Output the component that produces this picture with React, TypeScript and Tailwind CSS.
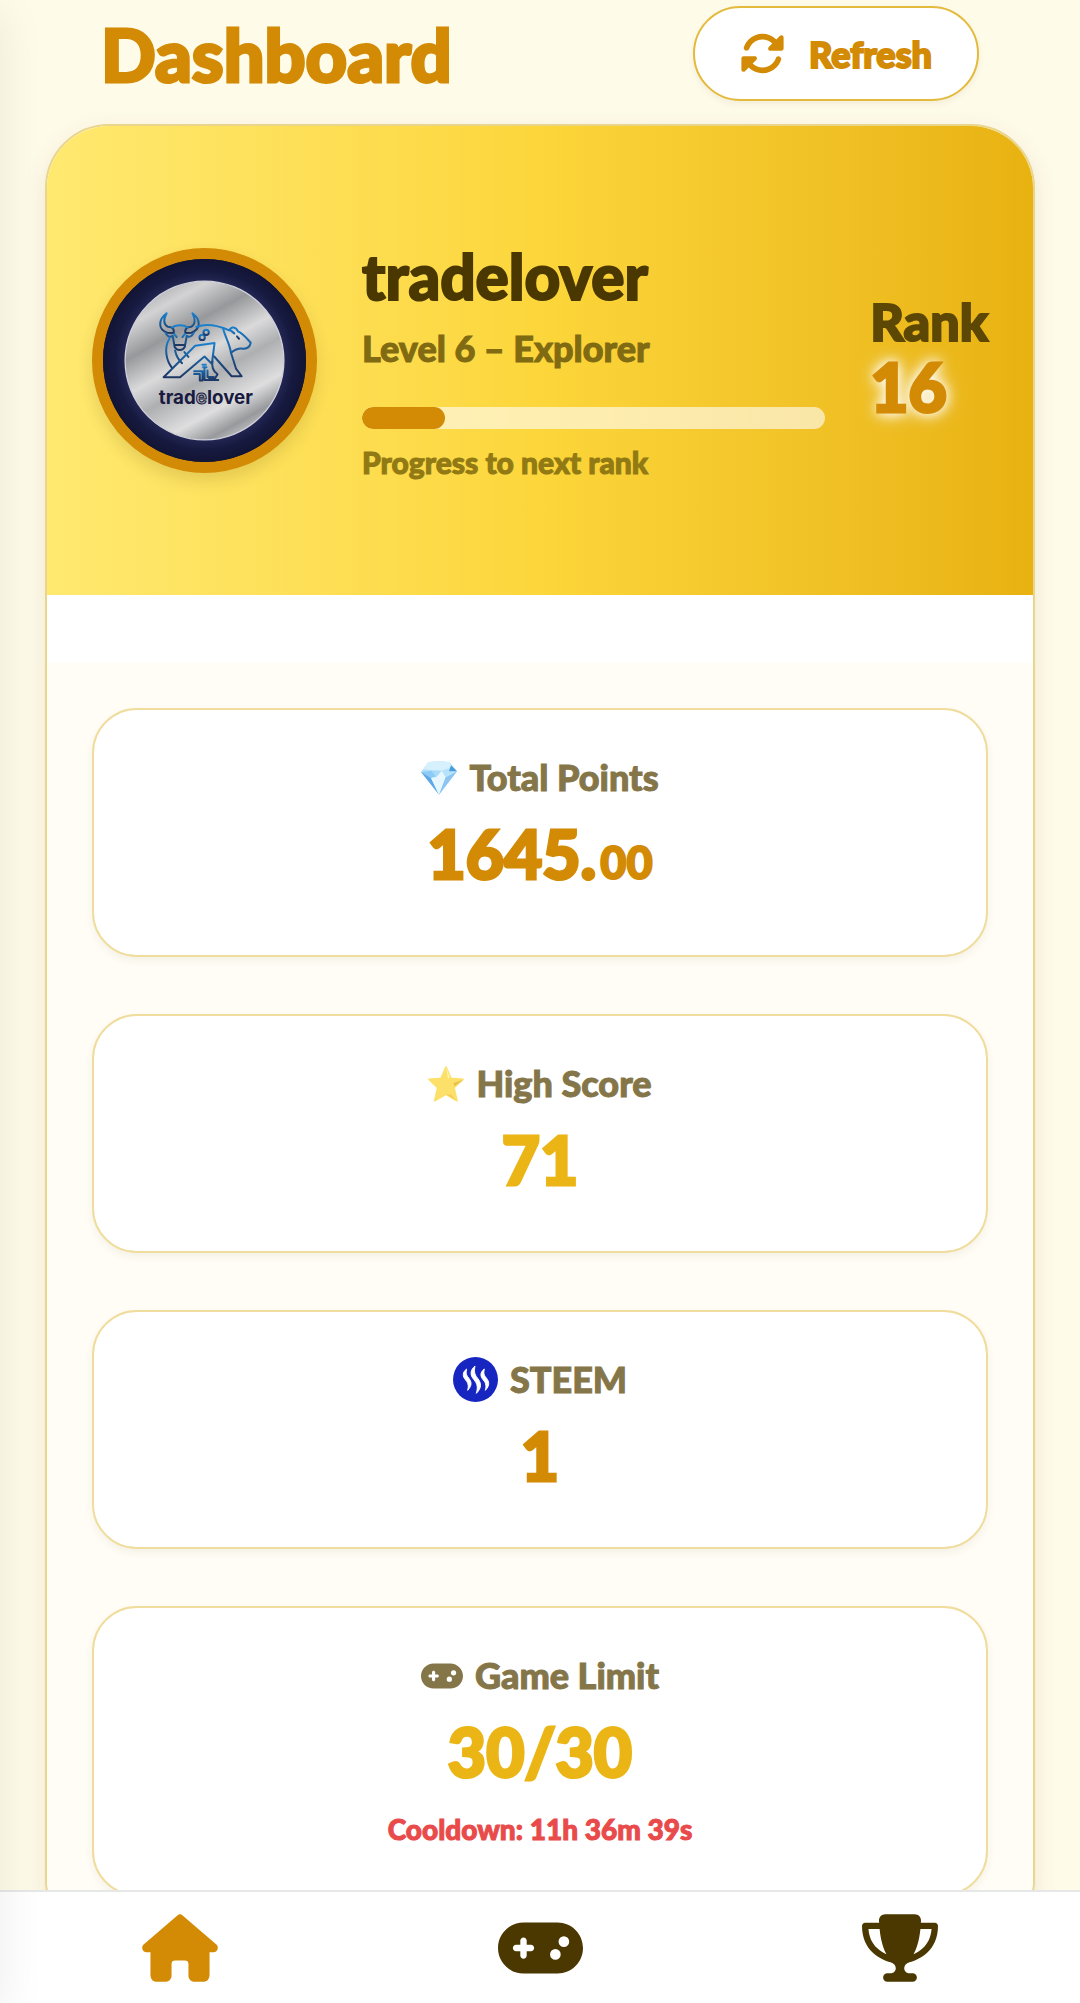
import type { ReactNode } from 'react';
import { FaGamepad, FaRotate, FaTrophy } from 'react-icons/fa6';

type StatTone = 'amber' | 'gold';

interface StatCardProps {
  icon: ReactNode;
  label: string;
  value: string;
  decimals?: string;
  tone?: StatTone;
  note?: string;
}

const TONE_MAP: Record<StatTone, string> = {
  amber: 'text-[#d38a04]',
  gold: 'text-[#eab515]',
};

function HomeIcon({ className }: { className?: string }) {
  return (
    <svg viewBox="0 0 576 512" fill="currentColor" className={className} aria-hidden="true">
      <path d="M268 9C280-3 296-3 308 9L566 232C582 248 576 288 544 288H512V456C512 490 495 512 462 512H400C370 512 352 490 352 464V376C352 358 342 350 324 350H252C234 350 224 358 224 376V464C224 490 206 512 176 512H114C81 512 64 490 64 456V288H32C0 288-6 248 10 232Z" />
    </svg>
  );
}

function GemIcon() {
  return (
    <svg viewBox="0 0 108 100" className="h-[34px] w-9" aria-hidden="true">
      <path d="M22 3Q54-3 86 3L108 30 54 100 0 32Z" fill="#b5e2fb" />
      <path d="M22 3Q54-3 86 3L92 18 62 28 32 26 8 24Z" fill="#d6f1fd" />
      <path d="M0 32 32 28 46 46 30 50Z" fill="#8ccbf5" />
      <path d="M0 32 30 50 54 100Z" fill="#5fa9e8" />
      <path d="M30 50 46 46 62 28 74 48 54 100Z" fill="#e6f7fe" />
      <path d="M74 48 108 30 54 100Z" fill="#8cc4f2" />
      <path d="M74 48 84 30 108 30Z" fill="#b9e3fb" />
      <path d="M84 30 90 12 108 30Z" fill="#4a9ddb" />
      <path d="M32 28 62 28 46 46Z" fill="#a9daf8" />
    </svg>
  );
}

function StarIcon() {
  return (
    <svg viewBox="0 0 108 108" className="size-9" aria-hidden="true">
      <path
        d="M54 3 69 37 105 40 78 65 87 104 54 85 20 104 29 65 3 40 39 37Z"
        fill="#fde06a"
        stroke="#fde06a"
        strokeWidth="5"
        strokeLinejoin="round"
      />
      <path d="M54 3 66 34 60 38Z" fill="#fff3a8" />
      <path d="M76 51 105 41 80 61Z" fill="#eabf4c" />
      <path d="M54 85 84 104 70 86Z" fill="#f5cd55" />
    </svg>
  );
}

function SteemIcon() {
  return (
    <svg viewBox="0 0 135 135" className="size-[45px]" aria-hidden="true">
      <circle cx="67.500" cy="67.500" r="67.500" fill="#1726c0" />
      <g fill="#fff" stroke="#fff" strokeWidth="3" strokeLinejoin="round">
        <path d="M41 36C28 46 28 58 38 69C47 80 47 88 44 100C58 85 56 74 47 63C38 53 39 45 41 36Z" />
        <path d="M66 27C51 40 51 54 62 67C74 81 75 92 70 109C87 92 85 78 74 64C62 50 64 40 66 27Z" />
        <path d="M94 36C81 46 81 58 91 69C100 80 100 88 97 100C111 85 109 74 100 63C91 53 92 45 94 36Z" />
      </g>
    </svg>
  );
}

function Avatar() {
  return (
    <div className="size-[225px] shrink-0 overflow-hidden rounded-full border-[11px] border-[#d38a04] bg-[#14163a] shadow-[0_8px_16px_rgba(74,56,0,0.14)]">
      <svg viewBox="71 87 606 606" className="size-full" role="img" aria-label="tradelover avatar">
        <defs>
          <radialGradient id="navy">
            <stop offset="0.75" stopColor="#262a58" />
            <stop offset="0.87" stopColor="#171a40" />
            <stop offset="1" stopColor="#121433" />
          </radialGradient>
          <linearGradient id="silver" x1="0.2" y1="0" x2="0.75" y2="1">
            <stop offset="0" stopColor="#a6a7aa" />
            <stop offset="0.14" stopColor="#d3d3d4" />
            <stop offset="0.3" stopColor="#97989b" />
            <stop offset="0.47" stopColor="#dadadb" />
            <stop offset="0.6" stopColor="#aeafb1" />
            <stop offset="0.78" stopColor="#dededf" />
            <stop offset="0.9" stopColor="#98999c" />
            <stop offset="1" stopColor="#d2d2d4" />
          </linearGradient>
          <linearGradient id="blue" x1="0" y1="0" x2="0" y2="1">
            <stop offset="0" stopColor="#1a80cd" />
            <stop offset="1" stopColor="#1d3764" />
          </linearGradient>
        </defs>
        <circle cx="374" cy="390" r="305" fill="url(#navy)" />
        <circle cx="374" cy="390" r="237" fill="url(#silver)" stroke="#cfd0da" strokeWidth="4" />

        {/* Bull, bear and the arrow between them */}
        <g fill="none" stroke="url(#blue)" strokeWidth="6" strokeLinejoin="round" strokeLinecap="round">
          <path d="M261 249C237 267 233 296 263 307L282 308C285 294 275 289 264 289C250 281 253 264 261 249Z" />
          <path d="M338 249C362 267 365 296 335 307L317 308C314 294 325 289 335 289C348 281 346 264 338 249Z" />
          <path d="M277 291C291 283 311 283 324 291M258 307C264 322 274 321 279 316L285 350C292 362 308 362 315 350L321 316C328 322 337 318 342 307" />
          <path d="M287 344H313M284 311 291 320M315 311 308 320" />
          <path d="M269 325C252 353 260 390 277 412M286 360C290 377 297 389 307 398M314 365 326 379" />
          <path d="M252 440 346 346 404 338 396 400 374 378 301 440Z" />
          <path d="M350 290C384 276 421 288 448 300C454 286 468 290 474 303C490 310 501 325 512 337C509 352 500 357 484 354C470 353 462 360 453 367L468 414 485 437H455L403 378" />
          <path d="M430 297C438 324 450 343 453 367M398 392C394 414 402 424 413 431L405 444H388" />
          <path d="M452 300 463 309M471 318 477 325" />
          <circle cx="367" cy="321" r="8" />
          <circle cx="379" cy="306" r="8" />
          <path d="M343 422H368V450M374 412V448H415M343 430H360V450H368M383 420V439H402M368 403H378M370 410H380" />
        </g>
        <text
          x="378"
          y="520"
          textAnchor="middle"
          fill="#181a40"
          className="font-['Inter',sans-serif] text-[56px] font-bold"
        >
          trad
          <tspan fill="#a5a6b0" stroke="#181a40" strokeWidth="3">e</tspan>
          lover
        </text>
      </svg>
    </div>
  );
}

function StatCard({ icon, label, value, decimals, tone = 'amber', note }: StatCardProps) {
  return (
    <article
      className={`rounded-[45px] border-2 border-[#f0dc9c] bg-white px-11 pt-[45px] text-center shadow-[0_4px_8px_rgba(74,56,0,0.06)] ${decimals ? 'pb-[55px]' : 'pb-[45px]'}`}
    >
      <h3 className="mb-2 flex h-[45px] items-center justify-center gap-3 text-[36px] leading-[45px] font-black text-[#857649] [-webkit-text-stroke:1px]">
        {icon}
        {label}
      </h3>
      <p className={`text-[66px] leading-[92px] font-black [-webkit-text-stroke:3px] ${TONE_MAP[tone]}`}>
        {value}
        {decimals && <span className="ml-1 text-[45px] leading-none [-webkit-text-stroke:2px]">{decimals}</span>}
      </p>
      {note && (
        <p className="mt-2 pt-1 text-[28px] leading-[39px] font-black text-[#e94a4a] [-webkit-text-stroke:1px]">
          {note}
        </p>
      )}
    </article>
  );
}

function ProfileHeader() {
  const progress = 18;

  return (
    <section className="flex h-[469px] items-center gap-[45px] bg-linear-to-r from-[#ffe96f] via-[#fcd63a] to-[#e8b210] px-[45px]">
      <Avatar />
      <div className="min-w-0 flex-1 pt-1">
        <h2 className="text-[62px] leading-[68px] font-black text-[#4a3800] [-webkit-text-stroke:2px]">tradelover</h2>
        <p className="mt-4 text-[36px] leading-[45px] font-black text-[#806a12] [-webkit-text-stroke:1px]">
          Level 6 – Explorer
        </p>
        <div className="mt-9 h-[22px] overflow-hidden rounded-full bg-white/60">
          <div className="h-full rounded-full bg-[#d38a04]" style={{ width: `${progress}%` }} />
        </div>
        <p className="mt-3 text-[30px] leading-[43px] font-black text-[#917914] [-webkit-text-stroke:1px]">
          Progress to next rank
        </p>
      </div>
      <div className="shrink-0 pb-3">
        <p className="text-[52px] leading-[64px] font-black text-[#5c4704] [-webkit-text-stroke:2px]">Rank</p>
        <p className="text-[66px] leading-[68px] font-black text-[#d38a04] [-webkit-text-stroke:3px] [text-shadow:0_0_12px_#fff,0_0_16px_#fff,0_0_22px_rgba(255,255,255,0.7)]">
          16
        </p>
      </div>
    </section>
  );
}

function BottomNav() {
  return (
    <nav className="fixed inset-x-0 bottom-0 z-10 grid h-[113px] grid-cols-3 border-t-2 border-[#e6e8e8] bg-white text-[#4a3800]">
      <a href="#home" aria-label="Home" className="flex items-center justify-center text-[#d38a04]">
        <HomeIcon className="h-[68px] w-[76px]" />
      </a>
      <a href="#games" aria-label="Games" className="flex items-center justify-center">
        <FaGamepad className="h-[68px] w-[85px]" />
      </a>
      <a href="#leaderboard" aria-label="Leaderboard" className="flex items-center justify-center">
        <FaTrophy className="h-[68px] w-[76px]" />
      </a>
    </nav>
  );
}

export default function App() {
  return (
    <div className="min-h-screen bg-[#fffbe9] px-[45px] pb-[58px] font-['Lato',sans-serif]">
      <header className="flex items-center justify-between px-14 pt-[6px] pb-[23px]">
        <h1 className="text-[72px] leading-[90px] font-black text-[#d38a04] [-webkit-text-stroke:3px]">Dashboard</h1>
        <button
          type="button"
          className="flex h-[95px] items-center gap-6 rounded-full border-2 border-[#e3ba3c] bg-white px-[45px] text-[36px] font-black text-[#d38a04] shadow-[0_3px_6px_rgba(74,56,0,0.07)] [-webkit-text-stroke:2px]"
        >
          <FaRotate className="size-[45px]" />
          Refresh
        </button>
      </header>

      <main className="overflow-hidden rounded-[64px] border-2 border-[#e9d58c] bg-white shadow-[0_8px_24px_rgba(74,56,0,0.1)]">
        <ProfileHeader />
        <section className="mt-[68px] flex flex-col gap-[57px] bg-[#fffdf5] p-[45px]">
          <StatCard icon={<GemIcon />} label="Total Points" value="1645." decimals="00" />
          <StatCard icon={<StarIcon />} label="High Score" value="71" tone="gold" />
          <StatCard icon={<SteemIcon />} label="STEEM" value="1" />
          <StatCard
            icon={<FaGamepad className="h-[34px] w-[42px]" />}
            label="Game Limit"
            value="30/30"
            tone="gold"
            note="Cooldown: 11h 36m 39s"
          />
        </section>
      </main>

      <BottomNav />

      {/* Closed drawer, only its shadow reaches the page */}
      <aside
        aria-hidden="true"
        className="pointer-events-none fixed inset-y-0 -left-64 z-20 w-64 shadow-[0_12px_45px_rgba(0,0,0,0.08)]"
      />
    </div>
  );
}
